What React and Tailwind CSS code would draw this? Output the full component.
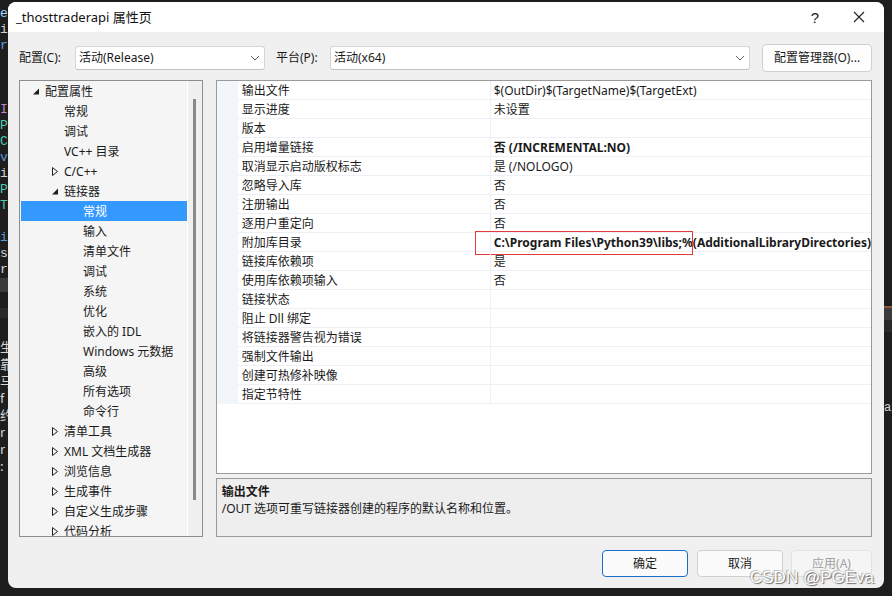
import React from "react";

const F = "font-['Noto_Sans','Noto_Sans_CJK_SC',sans-serif]";

const treeItems = [
  { t: "配置属性", l: 0, a: "open" },
  { t: "常规", l: 1 },
  { t: "调试", l: 1 },
  { t: "VC++ 目录", l: 1 },
  { t: "C/C++", l: 1, a: "closed" },
  { t: "链接器", l: 1, a: "open" },
  { t: "常规", l: 2, sel: true },
  { t: "输入", l: 2 },
  { t: "清单文件", l: 2 },
  { t: "调试", l: 2 },
  { t: "系统", l: 2 },
  { t: "优化", l: 2 },
  { t: "嵌入的 IDL", l: 2 },
  { t: "Windows 元数据", l: 2 },
  { t: "高级", l: 2 },
  { t: "所有选项", l: 2 },
  { t: "命令行", l: 2 },
  { t: "清单工具", l: 1, a: "closed" },
  { t: "XML 文档生成器", l: 1, a: "closed" },
  { t: "浏览信息", l: 1, a: "closed" },
  { t: "生成事件", l: 1, a: "closed" },
  { t: "自定义生成步骤", l: 1, a: "closed" },
  { t: "代码分析", l: 1, a: "closed" },
];

const props = [
  ["输出文件", "$(OutDir)$(TargetName)$(TargetExt)"],
  ["显示进度", "未设置"],
  ["版本", ""],
  ["启用增量链接", "否 (/INCREMENTAL:NO)", true],
  ["取消显示启动版权标志", "是 (/NOLOGO)"],
  ["忽略导入库", "否"],
  ["注册输出", "否"],
  ["逐用户重定向", "否"],
  ["附加库目录", "C:\\Program Files\\Python39\\libs;%(AdditionalLibraryDirectories)", true, true],
  ["链接库依赖项", "是"],
  ["使用库依赖项输入", "否"],
  ["链接状态", ""],
  ["阻止 Dll 绑定", ""],
  ["将链接器警告视为错误", ""],
  ["强制文件输出", ""],
  ["创建可热修补映像", ""],
  ["指定节特性", ""],
];

const padMap = { 0: "pl-[10px]", 1: "pl-[29px]", 2: "pl-[48px]" };

function Arrow({ kind, sel }) {
  if (kind === "open")
    return (
      <svg width="15" height="20" viewBox="0 0 15 20">
        <path d="M9 7.5 L9 13.5 L3 13.5 Z" fill={sel ? "#fff" : "#1e1e1e"} />
      </svg>
    );
  if (kind === "closed")
    return (
      <svg width="15" height="20" viewBox="0 0 15 20">
        <path d="M3.5 6.5 L8.5 10.5 L3.5 14.5 Z" fill="none" stroke="#1e1e1e" strokeWidth="1" />
      </svg>
    );
  return <div className="w-[15px] h-[20px]" />;
}

function Chevron() {
  return (
    <svg width="10" height="6" viewBox="0 0 10 6">
      <path d="M1 1 L5 5 L9 1" fill="none" stroke="#606060" strokeWidth="1" />
    </svg>
  );
}

const codeLines = [
  ["e", "text-[#9cdcfe]"],
  ["i", "text-[#d4d4d4]"],
  ["r", "text-[#569cd6]"],
  ["", ""],
  ["", ""],
  ["", ""],
  ["I", "text-[#c586c0]"],
  ["P", "text-[#4ec9b0]"],
  ["C", "text-[#4ec9b0]"],
  ["v", "text-[#569cd6]"],
  ["i", "text-[#d4d4d4]"],
  ["P", "text-[#4ec9b0]"],
  ["T", "text-[#4ec9b0]"],
  ["", ""],
  ["i", "text-[#569cd6]"],
  ["s", "text-[#d4d4d4]"],
  ["r", "text-[#d4d4d4]"],
];

export default function App() {
  return (
    <div className={`w-[892px] h-[596px] bg-[#1e1e1e] flex overflow-hidden relative ${F}`}>
      {/* left editor strip */}
      <div className="w-[8px] h-full flex flex-col overflow-hidden pt-[6px] font-['Liberation_Mono',monospace] text-[13px] leading-[16px]">
        {codeLines.map((c, i) => (
          <div key={i} className={`h-[16px] ${c[1]}`}>{c[0]}</div>
        ))}
        <div className="h-[14px] bg-[#3a3a3a]" />
        <div className="h-[16px]" />
        <div className="h-[10px] bg-[#2a2a2a]" />
        <div className="flex flex-col text-[#d4d4d4] font-['Noto_Sans_CJK_SC',sans-serif] text-[13px] leading-[17px] mt-[20px]">
          <span>生</span>
          <span>靠</span>
          <span>马</span>
          <span>f</span>
          <span>约</span>
          <span>r</span>
          <span>r</span>
          <span>:</span>
        </div>
      </div>

      {/* dialog */}
      <div className="w-[876px] h-[586px] mt-[2px] bg-[#f0f0f0] rounded-t-[8px] rounded-b-[8px] flex flex-col overflow-hidden text-[12px] text-[#1a1a1a]">
        {/* title bar */}
        <div className="h-[30px] bg-white flex items-center">
          <div className="pl-[8px] text-[13px] text-[#111] flex-1 leading-none">_thosttraderapi 属性页</div>
          <div className="w-[30px] text-[15px] text-[#222] text-center leading-none font-['Liberation_Sans',sans-serif]">?</div>
          <div className="w-[14px]" />
          <div className="w-[30px] flex justify-center mr-[10px]">
            <svg width="12" height="12" viewBox="0 0 12 12">
              <path d="M1 1 L11 11 M11 1 L1 11" stroke="#222" strokeWidth="1.1" />
            </svg>
          </div>
        </div>

        {/* config row */}
        <div className="h-[28px] mt-[12px] flex items-center pl-[11px] pr-[12px]">
          <span className="w-[56px] leading-none">配置(C):</span>
          <div className="w-[190px] h-[24px] bg-white border border-[#d6d6d6] border-b-[#c2c2c2] rounded-[3px] flex items-center pl-[3px] pr-[4px]">
            <span className="flex-1 leading-none">活动(Release)</span>
            <Chevron />
          </div>
          <span className="ml-[11px] w-[54px] leading-none">平台(P):</span>
          <div className="w-[420px] h-[24px] bg-white border border-[#d6d6d6] border-b-[#c2c2c2] rounded-[3px] flex items-center pl-[3px] pr-[4px]">
            <span className="flex-1 leading-none">活动(x64)</span>
            <Chevron />
          </div>
          <div className="flex-1" />
          <div className="w-[110px] h-[28px] bg-[#fdfdfd] border border-[#d0d0d0] rounded-[4px] flex items-center justify-center leading-none">
            配置管理器(O)...
          </div>
        </div>

        {/* main */}
        <div className="mt-[8px] flex pl-[11px] pr-[12px] h-[457px]">
          {/* tree */}
          <div className="w-[186px] h-[457px] border border-[#8e8e8e] bg-[#f5f5f5] flex overflow-hidden">
            <div className="w-[167px] flex flex-col overflow-hidden">
              {treeItems.map((it, i) => (
                <div
                  key={i}
                  className={`h-[20px] shrink-0 flex items-center ${padMap[it.l]} ${it.sel ? "bg-[#3399ff] text-white ml-px" : ""}`}
                >
                  <div className={it.sel ? "-ml-px" : ""}>
                    <Arrow kind={it.a} sel={it.sel} />
                  </div>
                  <span className="leading-none whitespace-nowrap pt-[2px]">{it.t}</span>
                </div>
              ))}
            </div>
            <div className="w-px bg-white" />
            <div className="flex-1 bg-[#f0f0f0] flex justify-center pt-[18px]">
              <div className="w-[3px] h-[401px] bg-[#8a8a8a]" />
            </div>
          </div>

          <div className="w-[13px]" />

          {/* right column */}
          <div className="flex-1 flex flex-col">
            <div className="h-[394px] border border-[#9a9a9a] bg-white flex flex-col overflow-hidden">
              {props.map((p, i) => (
                <div key={i} className="h-[19px] shrink-0 flex relative">
                  <div className="w-[21px] bg-[#f2f6fb]" />
                  <div className="w-[253px] border-b border-r border-[#eef0f5] flex items-center pl-[4px] pt-[2px]">
                    <span className="leading-none whitespace-nowrap">{p[0]}</span>
                  </div>
                  <div className="flex-1 border-b border-[#eef0f5] flex items-center pl-[3px] pt-[2px] overflow-hidden">
                    <span className={`leading-none whitespace-nowrap ${p[2] ? "font-bold" : ""}`}>{p[1]}</span>
                  </div>
                  {p[3] && (
                    <div className="absolute left-[258px] top-[-2px] w-[218px] h-[24px] border border-[#e23b3b]" />
                  )}
                </div>
              ))}
              <div className="flex-1" />
            </div>
            <div className="h-[4px]" />
            <div className="h-[59px] border border-[#9a9a9a] bg-[#eeeeee] pl-[5px] pt-[4px] flex flex-col">
              <div className="font-bold leading-[17px]">输出文件</div>
              <div className="leading-[17px]">/OUT 选项可重写链接器创建的程序的默认名称和位置。</div>
            </div>
          </div>
        </div>

        {/* buttons */}
        <div className="mt-[13px] flex justify-end pr-[12px]">
          <div className="w-[86px] h-[27px] bg-[#fbfbfb] border border-[#1a6fc9] rounded-[4px] flex items-center justify-center leading-none">确定</div>
          <div className="w-[9px]" />
          <div className="w-[86px] h-[27px] bg-[#fbfbfb] border border-[#d0d0d0] rounded-[4px] flex items-center justify-center leading-none">取消</div>
          <div className="w-[8px]" />
          <div className="w-[81px] h-[27px] bg-[#f5f5f5] border border-[#e2e2e2] rounded-[4px] flex items-center justify-center leading-none text-[#a0a0a0]">应用(A)</div>
        </div>
      </div>

      {/* right strip */}
      <div className="w-[8px] h-full flex flex-col">
        <div className="h-[306px]" />
        <div className="h-[2px] bg-[#8a5a3a]" />
        <div className="h-[12px] bg-[#3c3c3c]" />
        <div className="h-[12px] bg-[#2a2a2a]" />
        <div className="h-[70px]" />
        <div className="text-[#d4d4d4] font-['Liberation_Mono',monospace] text-[12px] leading-none">ap</div>
      </div>

      {/* watermark */}
      <div className="absolute left-[750px] top-[569px] text-[17px] leading-none text-white font-['Liberation_Sans',sans-serif] [text-shadow:1px_1px_1px_rgba(0,0,0,0.55),-1px_-1px_1px_rgba(0,0,0,0.25)]">
        CSDN @PGEva
      </div>
    </div>
  );
}
